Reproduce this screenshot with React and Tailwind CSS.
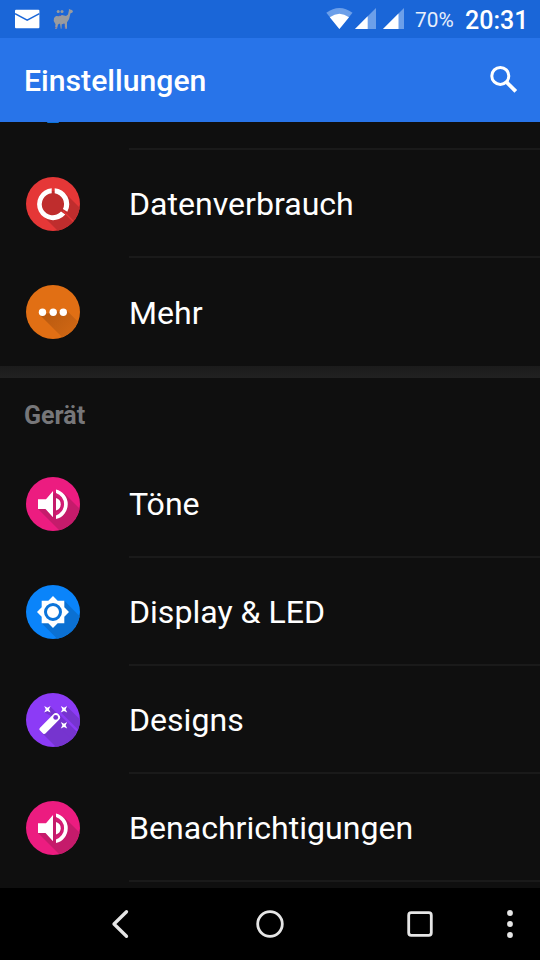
import React from "react";

function Disc({ id, color, children }) {
  return (
    <svg className="h-[54px] w-[54px] shrink-0" viewBox="0 0 54 54">
      <clipPath id={id}>
        <circle cx="27" cy="27" r="27" />
      </clipPath>
      <g clipPath={`url(#${id})`}>
        <rect width="54" height="54" fill={color} />
        {children}
      </g>
    </svg>
  );
}

function DataIcon() {
  return (
    <Disc id="data" color="#e53737">
      <path d="M16 38l23-22 30 30-23 22z" fill="#bf2d2d" />
      <circle cx="27" cy="27" r="13" fill="#bf2d2d" />
      <path d="M28.7 11.2v5.1a11 11 0 0 1 8.2 15.8l4.4 2.7A16 16 0 0 0 28.7 11.2z" fill="#fff" />
      <path d="M25.7 11.2v5.1A11 11 0 1 0 35 34.5l4.3 3A16 16 0 1 1 25.7 11.2z" fill="#fff" />
      <path d="M37 34l12 12" stroke="#e53737" strokeWidth="1.2" />
    </Disc>
  );
}

function MoreIcon() {
  return (
    <Disc id="more" color="#e16f14">
      <linearGradient id="moreShade" gradientUnits="userSpaceOnUse" x1="22" y1="22" x2="44" y2="44">
        <stop offset="0" stopColor="#b85910" />
        <stop offset="1" stopColor="#cc6513" />
      </linearGradient>
      <path d="M13.9 29.9l30 30L70 54.7l-30-30z" fill="url(#moreShade)" />
      <circle cx="16.5" cy="27.3" r="3.7" fill="#fff" />
      <circle cx="27.2" cy="27.3" r="3.7" fill="#fff" />
      <circle cx="37.3" cy="27.3" r="3.7" fill="#fff" />
    </Disc>
  );
}

function SoundIcon({ id }) {
  return (
    <Disc id={id} color="#ec1c80">
      <path d="M12 32l30 30 29-13-32-32-9-3z" fill="#c51b6b" />
      <path d="M12 22.3h8L27 14v26.3L19.5 32H12z" fill="#fff" />
      <path d="M30 17.5a10.2 10.2 0 0 1 0 19.5" fill="none" stroke="#d51c75" strokeWidth="3" />
      <path d="M30 21a6.5 6.5 0 0 1 0 12.5z" fill="#fff" />
      <path d="M30 12.4a15.2 15.2 0 0 1 0 29.6v-3.6a11.8 11.8 0 0 0 0-22.4z" fill="#fff" />
    </Disc>
  );
}

function DisplayIcon() {
  return (
    <Disc id="display" color="#0a84fa">
      <path d="M15.7 38.3l22.6-22.6 30 30-22.6 22.6z" fill="#0b70d2" />
      <path
        transform="translate(10.03 10.03) scale(1.414)"
        d="M20 15.31L23.31 12 20 8.69V4h-4.69L12 .69 8.69 4H4v4.69L.69 12 4 15.31V20h4.69L12 23.31 15.31 20H20z"
        fill="#fff"
      />
      <circle cx="27" cy="27" r="7.5" fill="#fff" stroke="#0b74da" strokeWidth="3" />
    </Disc>
  );
}

function Spark({ x, y }) {
  return (
    <path
      transform={`translate(${x} ${y})`}
      d="M-3.2-3.2L0-1.6 3.2-3.2 1.6 0 3.2 3.2 0 1.6-3.2 3.2-1.6 0z"
      fill="#fff"
    />
  );
}

function ThemeIcon() {
  return (
    <Disc id="theme" color="#8c3bf6">
      <path d="M16.5 40.5L33.5 21.5l32 32-17 19z" fill="#7634cf" />
      <path d="M18.3 19.5l6-6 12 12-6 0z" fill="#7634cf" />
      <path d="M35 19.5l6-6 25 25-6 6z" fill="#7634cf" />
      <path d="M35 35.5l6-6 25 25-6 6z" fill="#7634cf" />
      <path d="M13.8 35L27.1 21.4a3.9 3.9 0 0 1 5.7 5.7L19.4 40.6q-1.2 1-2.4-.1l-3.2-3.2q-1.1-1.1 0-2.3z" fill="#fff" />
      <circle cx="29.7" cy="24.4" r="2.4" fill="#7634cf" />
      <Spark x="21.4" y="16.3" />
      <Spark x="38" y="16.3" />
      <Spark x="38" y="32.3" />
    </Disc>
  );
}

function Row({ icon, label, last }) {
  return (
    <div className="flex h-[108px] pl-[26px]">
      <div className="flex w-[103px] shrink-0 items-center">{icon}</div>
      <div className={`flex flex-1 items-center pt-0.5 text-[32.1px] text-white ${last ? "" : "border-b-2 border-[#1a1a1a]"}`}>
        <span className="whitespace-nowrap">{label}</span>
      </div>
    </div>
  );
}

function Signal({ filled }) {
  return (
    <svg className="h-[21px] w-[21px]" viewBox="0 0 21 21">
      <path d="M21 0v21H0z" fill="#6c9fe9" />
      <path d={`M${filled} ${21 - filled}V21H0z`} fill="#fff" />
    </svg>
  );
}

export default function App() {
  return (
    <div className="flex h-[960px] w-[540px] flex-col overflow-hidden bg-[#0f0f0f] font-['Roboto',sans-serif]">
      <div className="flex h-[38px] shrink-0 bg-[#1a66d8] pl-[15px] text-white">
        <svg className="mt-[9px] h-5 w-[25px]" viewBox="0 0 25 20">
          <rect y=".7" width="24.4" height="18.6" rx="1" fill="#fff" />
          <path d="M0 4.7l12.2 6.4 12.2-6.4" fill="none" stroke="#1a66d8" strokeWidth="1.5" />
        </svg>
        <svg className="mt-[8px] ml-[12px] h-[22px] w-[22px]" viewBox="0 0 22 22">
          <path d="M2 10l2-2 3 .3L10 7l4 1 2-1.5L17 2l-.2-1.2 1.2.6L20 2l1 1.3-.8 1.4-1.7.5-1.5 6-2 3v6.5h-2l-.3-5-3 .5-.2 4.5H8.8L8 15.5l-2 1L5 20.8H3l.5-4.5L1.7 13z" fill="#999b9f" />
          <circle cx="6.2" cy="3.6" r="1.5" fill="#999b9f" />
          <circle cx="10" cy="3.6" r="1.5" fill="#999b9f" />
          <path d="M7 7.5h2M11.8 15.5v1M3.8 19v1M12 20h1.5" stroke="#6551ad" strokeWidth=".9" />
        </svg>
        <svg className="mt-[8px] ml-[252px] h-[21px] w-[27px]" viewBox="0 0 27 21">
          <path d="M.3 4.7Q13.4-4.7 26.5 4.7L13.4 21z" fill="#6c9fe9" />
          <path d="M3.8 9.2Q13.4 2.2 23 9.2L13.4 21z" fill="#fff" />
        </svg>
        <div className="mt-[8px] ml-[2px] flex gap-[7px]">
          <Signal filled={12.7} />
          <Signal filled={15.5} />
        </div>
        <span className="ml-[11px] w-[50px] pt-[5px] text-[20.8px] leading-[30px] text-[#e7effb]">70%</span>
        <span className="pt-[6px] text-[25px] leading-[30px] font-medium">20:31</span>
      </div>
      <div className="flex h-[84px] shrink-0 items-center justify-between bg-[#2874e9] pr-[22px] pl-6 text-white">
        <h1 className="pt-[2px] text-[30.2px] font-medium">Einstellungen</h1>
        <svg className="mb-[2px] h-[28px] w-[28px]" viewBox="0 0 28 28" fill="none" stroke="#fff">
          <circle cx="10.3" cy="10.9" r="8.5" strokeWidth="3" />
          <path d="M16.6 17.2l9.2 9.2" strokeWidth="3.8" />
        </svg>
      </div>
      <div className="flex h-7 shrink-0 flex-col justify-between">
        <div className="ml-[47px] h-[1px] w-[12px] rounded-b-full bg-[#0b74da]" />
        <div className="ml-[129px] h-0.5 bg-[#1a1a1a]" />
      </div>
      <Row icon={<DataIcon />} label="Datenverbrauch" />
      <Row icon={<MoreIcon />} label="Mehr" last />
      <div className="h-3 shrink-0 bg-gradient-to-b from-[#1b1b1b] to-[#212121]" />
      <h2 className="flex h-[72px] shrink-0 items-center pt-[3px] pl-6 text-[25px] font-bold text-[#77777a]">Gerät</h2>
      <Row icon={<SoundIcon id="sound" />} label="Töne" />
      <Row icon={<DisplayIcon />} label="Display &amp; LED" />
      <Row icon={<ThemeIcon />} label="Designs" />
      <Row icon={<SoundIcon id="notify" />} label="Benachrichtigungen" />
      <div className="h-1.5 shrink-0" />
      <div className="flex h-[72px] shrink-0 items-center bg-black pl-[106px]">
        <svg className="h-8 w-[434px]" viewBox="0 0 434 32" fill="none" stroke="#e6e6e6" strokeWidth="2.8">
          <path d="M20.5 3.7L8 16l12.5 12.3" strokeWidth="3.3" strokeLinecap="round" strokeLinejoin="round" />
          <circle cx="164" cy="16" r="12.3" />
          <rect x="302.7" y="4.7" width="22.6" height="22.6" rx="2.5" />
          <g fill="#e6e6e6" stroke="none">
            <circle cx="404" cy="5" r="2.9" />
            <circle cx="404" cy="16" r="2.9" />
            <circle cx="404" cy="27" r="2.9" />
          </g>
        </svg>
      </div>
    </div>
  );
}
